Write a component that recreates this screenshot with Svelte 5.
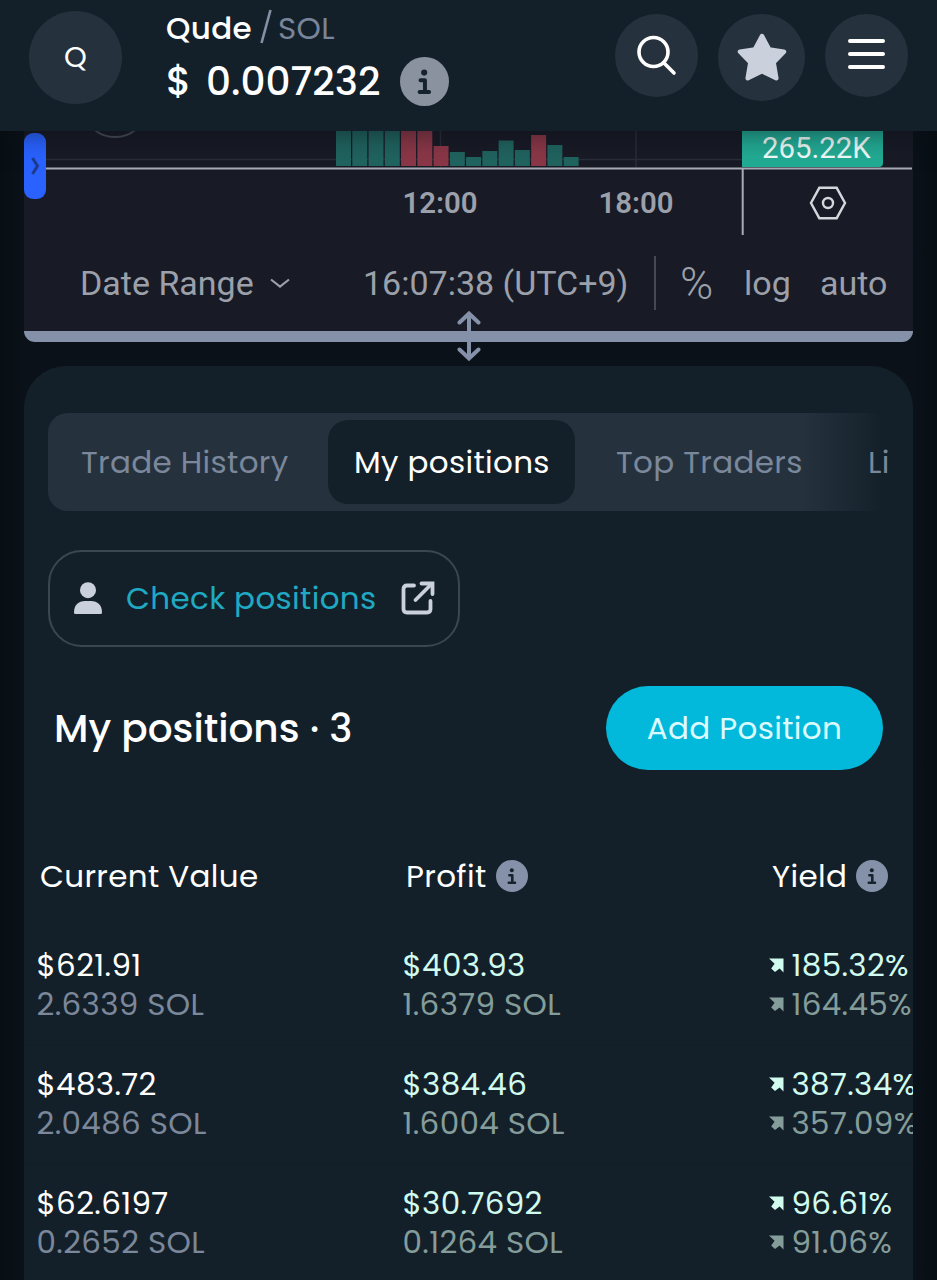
<script>
  let activeTab = $state('My positions');

  const tabs = [
    { name: 'Trade History', cls: 'history' },
    { name: 'My positions', cls: 'mine' },
    { name: 'Top Traders', cls: 'top' },
    { name: 'Li', cls: 'last' }
  ];

  // volume bars, heights in px above the time axis
  const volume = [
    { h: 36, up: true },
    { h: 36, up: true },
    { h: 36, up: true },
    { h: 36, up: true },
    { h: 36, up: false },
    { h: 36, up: false },
    { h: 20, up: false },
    { h: 14, up: true },
    { h: 9, up: true },
    { h: 15, up: true },
    { h: 25.5, up: true },
    { h: 16, up: true },
    { h: 31, up: false },
    { h: 21, up: true },
    { h: 9, up: true }
  ];

  const positions = [
    {
      value: '$621.91',
      valueSol: '2.6339 SOL',
      profit: '$403.93',
      profitSol: '1.6379 SOL',
      yieldUsd: '185.32%',
      yieldSol: '164.45%'
    },
    {
      value: '$483.72',
      valueSol: '2.0486 SOL',
      profit: '$384.46',
      profitSol: '1.6004 SOL',
      yieldUsd: '387.34%',
      yieldSol: '357.09%'
    },
    {
      value: '$62.6197',
      valueSol: '0.2652 SOL',
      profit: '$30.7692',
      profitSol: '0.1264 SOL',
      yieldUsd: '96.61%',
      yieldSol: '91.06%'
    }
  ];
</script>

{#snippet info(size)}
  <svg class="info" width={size} height={size} viewBox="0 0 32 32" aria-hidden="true">
    <circle cx="16" cy="16" r="16" fill="currentColor" />
    <circle cx="15.8" cy="10.2" r="2" fill="#17232c" />
    <path d="M13.4 15.2h2.9v7.4M12.8 22.8h6.2" fill="none" stroke="#17232c" stroke-width="2.6" stroke-linecap="round" stroke-linejoin="round" />
  </svg>
{/snippet}

{#snippet arrow()}
  <svg class="arrow" width="15" height="15" viewBox="0 0 15 15" aria-hidden="true">
    <path d="M0 .5H14.5V14.5L10.6 10.6 6 14 2.2 10.4 5.6 5.8Z" fill="currentColor" />
  </svg>
{/snippet}

<div class="page">
  <header>
    <div class="avatar">Q</div>
    <div class="token">
      <div class="pair">
        <span class="name">Qude</span>
        <svg class="slash" width="12" height="36" viewBox="0 0 12 36"><path d="M10.5 1 1.5 34" stroke="#8490a5" stroke-width="2.6" /></svg>
        <span class="quote">SOL</span>
      </div>
      <div class="price">
        <span class="dollar">$</span>
        <span class="amount">0.007232</span>
        {@render info(49)}
      </div>
    </div>
    <nav>
      <button class="round" aria-label="Search">
        <svg width="42" height="42" viewBox="0 0 42 42" fill="none" stroke="#fff" stroke-width="3.6" stroke-linecap="round">
          <circle cx="17.5" cy="17" r="14.5" />
          <path d="M28 28 38 38" />
        </svg>
      </button>
      <button class="round star" aria-label="Favourite">
        <svg width="50" height="49" viewBox="0 0 50 49">
          <path d="M25 3 32.2 16.6 47 18.7 36.6 29.4 39.3 45.2 25 38.2 10.7 45.2 13.4 29.4 3 18.7 17.8 16.6Z" fill="#cad0dc" stroke="#cad0dc" stroke-width="4.5" stroke-linejoin="round" />
        </svg>
      </button>
      <button class="round menu" aria-label="Menu">
        <svg width="37" height="32" viewBox="0 0 37 32" stroke="#fff" stroke-width="4" stroke-linecap="round">
          <path d="M2 3H35M2 16H35M2 29H35" />
        </svg>
      </button>
    </nav>
  </header>

  <section class="chart">
    <div class="plot">
      <svg width="889" height="105" viewBox="24 130 889 105" aria-hidden="true">
        <path d="M24 159.5H742M440.5 130V167M636 130V167" stroke="#2a2d38" stroke-width="1.5" />
        <circle cx="115" cy="104" r="33" fill="none" stroke="#474b56" stroke-width="2" />
        {#each volume as bar, i}
          <rect x={336 + i * 16.26} y={166 - bar.h} width="15" height={bar.h} fill={bar.up ? '#20635f' : '#8a3747'} />
        {/each}
        <path d="M24 168.5H912M742.7 168V235" stroke="#a9abb6" stroke-width="2" />
      </svg>
      <div class="volume-tag">265.22K</div>
      <span class="tick noon">12:00</span>
      <span class="tick evening">18:00</span>
      <svg class="axis-settings" width="38" height="34" viewBox="0 0 38 34" fill="none" stroke="#d4d6dc" stroke-width="2.4">
        <path d="M10.3 1.8H27.7L36 17 27.7 32.2H10.3L2 17Z" />
        <circle cx="19" cy="17" r="5" />
      </svg>
      <div class="handle">
        <svg width="9" height="18" viewBox="0 0 9 18"><path d="M1.5 1 6.5 9 1.5 17" fill="none" stroke="#1e3a8c" stroke-width="3" /></svg>
      </div>
    </div>
    <div class="toolbar">
      <span class="range">Date Range</span>
      <svg class="chevron" width="20" height="11" viewBox="0 0 20 11"><path d="M1 1.5 10 8.5 19 1.5" fill="none" stroke="#9ba0aa" stroke-width="2.2" /></svg>
      <span class="clock">16:07:38 (UTC+9)</span>
      <span class="divider"></span>
      <span class="percent">%</span>
      <span class="log">log</span>
      <span class="auto">auto</span>
    </div>
    <div class="resizer">
      <svg width="26" height="50" viewBox="0 0 26 50" fill="none" stroke="#8491a9" stroke-width="4" stroke-linecap="round">
        <path d="M13 3V47M3.5 11.5 13 2.5 22.5 11.5M3.5 38.5 13 47.5 22.5 38.5" />
      </svg>
    </div>
  </section>

  <main>
    <div class="tabs">
      {#each tabs as tab}
        <button class="tab {tab.cls}" class:active={tab.name === activeTab} onclick={() => (activeTab = tab.name)}>{tab.name}</button>
      {/each}
    </div>

    <button class="check">
      <svg width="28" height="33" viewBox="0 0 28 33" fill="#cad0dc">
        <circle cx="14" cy="8.2" r="8" />
        <path d="M0 30.5C0 23 4.5 19 11 19H17C23.5 19 28 23 28 30.5Q28 32 26.5 32H1.5Q0 32 0 30.5Z" />
      </svg>
      <span>Check positions</span>
      <svg class="external" width="34" height="34" viewBox="0 0 34 34" fill="none" stroke="#cad0dc" stroke-width="3.8" stroke-linecap="round">
        <path d="M13 4.5H6Q2.5 4.5 2.5 8V28Q2.5 31.5 6 31.5H26Q29.5 31.5 29.5 28V20" />
        <path d="M14.5 19 30 3.5" />
        <path d="M20.5 2.5H31.5V13" />
      </svg>
    </button>

    <div class="heading">
      <h1>My positions · 3</h1>
      <button class="add">Add Position</button>
    </div>

    <div class="grid head">
      <span>Current Value</span>
      <span>Profit {@render info(32)}</span>
      <span>Yield {@render info(32)}</span>
    </div>

    {#each positions as p}
      <div class="grid row">
        <div>
          <div class="usd">{p.value}</div>
          <div class="sol">{p.valueSol}</div>
        </div>
        <div class="gain">
          <div class="usd">{p.profit}</div>
          <div class="sol">{p.profitSol}</div>
        </div>
        <div class="gain">
          <div class="usd">{@render arrow()}{p.yieldUsd}</div>
          <div class="sol">{@render arrow()}{p.yieldSol}</div>
        </div>
      </div>
    {/each}
  </main>
</div>

<style>
  :global(body) {
    background: #091017;
  }
  .page {
    width: 937px;
    height: 1280px;
    overflow: hidden;
    display: flex;
    flex-direction: column;
    background: linear-gradient(90deg, #070e14, #0a1118 24px, #0a1118 913px, #070e14);
    color: #fff;
    font-family: Poppins, Inter, sans-serif;
    font-size: 31px;
    letter-spacing: 0.34px;
  }
  .page * {
    box-sizing: border-box;
  }
  svg {
    display: block;
    flex: none;
  }
  button {
    border: 0;
    padding: 0;
    margin: 0;
    background: none;
    color: inherit;
    font: inherit;
    letter-spacing: inherit;
  }
  span,
  h1,
  button {
    flex: none;
    white-space: nowrap;
  }

  /* header */
  header {
    position: relative;
    z-index: 1;
    flex: none;
    display: flex;
    align-items: flex-start;
    height: 131px;
    padding: 11px 29px 0;
    background: #142029;
    box-shadow: 0 2px 26px rgba(9, 14, 20, 0.55);
  }
  .avatar {
    width: 93px;
    height: 93px;
    border-radius: 50%;
    background: #25323e;
    font-size: 29px;
    line-height: 92px;
    text-align: center;
  }
  .token {
    margin-left: 44px;
    width: 300px;
    line-height: 36px;
  }
  .pair {
    display: flex;
    align-items: center;
    height: 33px;
  }
  .name {
    width: 94px;
    font-weight: 500;
  }
  .slash {
    margin-top: -2px;
  }
  .quote {
    margin-left: 6px;
    color: #78859a;
  }
  .price {
    display: flex;
    align-items: center;
    height: 52px;
    margin-top: 11px;
    font-size: 39px;
    font-weight: 500;
    letter-spacing: 0;
  }
  .dollar {
    width: 40px;
    padding-top: 2px;
  }
  .amount {
    width: 194px;
    padding-top: 2px;
  }
  .price .info {
    color: #8a929f;
  }
  nav {
    display: flex;
    align-items: flex-start;
    gap: 20px;
    margin-left: auto;
    padding-top: 3px;
  }
  .round {
    display: flex;
    align-items: center;
    justify-content: center;
    width: 83px;
    height: 83px;
    border-radius: 50%;
    background: #25323e;
  }
  .star {
    width: 87px;
    height: 87px;
  }
  .menu {
    padding-bottom: 3px;
  }

  /* chart */
  .chart {
    position: relative;
    flex: none;
    width: 889px;
    height: 212px;
    margin: -1px 24px 0;
    border-bottom: 11px solid #8491a9;
    border-radius: 0 0 11px 11px;
    background: #181a25;
    font-family: Roboto, sans-serif;
    letter-spacing: 0;
    color: #9ba0aa;
  }
  .plot {
    position: relative;
    height: 105px;
  }
  .volume-tag {
    position: absolute;
    left: 718px;
    top: 0;
    width: 141px;
    height: 37px;
    padding-left: 20px;
    border-radius: 0 0 4px 0;
    background: #22ab94;
    color: #eefaf8;
    font-size: 29.4px;
    line-height: 36px;
  }
  .tick {
    position: absolute;
    top: 55px;
    width: 100px;
    font-size: 29.4px;
    font-weight: 600;
    line-height: 36px;
    text-align: center;
  }
  .noon {
    left: 366px;
  }
  .evening {
    left: 562px;
  }
  .axis-settings {
    position: absolute;
    left: 785px;
    top: 56px;
  }
  .handle {
    position: absolute;
    left: 0;
    top: 3px;
    display: flex;
    align-items: center;
    justify-content: center;
    width: 22px;
    height: 66px;
    border-radius: 9px;
    background: #2962ff;
  }
  .toolbar {
    display: flex;
    align-items: center;
    height: 96px;
    padding-left: 56px;
    font-size: 34px;
  }
  .range {
    width: 190px;
  }
  .clock {
    width: 291px;
    margin-left: 73px;
  }
  .divider {
    width: 2px;
    height: 54px;
    background: #434a56;
  }
  .percent {
    width: 64px;
    margin-left: 24px;
    padding-top: 2px;
    font-size: 45px;
    font-weight: 300;
    line-height: 50px;
  }
  .log {
    width: 76px;
  }
  .resizer {
    position: absolute;
    left: 431.5px;
    bottom: -30px;
  }

  /* positions card */
  main {
    flex: 1;
    width: 889px;
    margin: 24px 24px 0;
    padding-top: 47px;
    border-radius: 42px 42px 0 0;
    background: #142029;
    overflow: hidden;
  }
  .tabs {
    display: flex;
    align-items: center;
    width: 842px;
    height: 98px;
    margin-left: 24px;
    border-radius: 20px;
    background: linear-gradient(90deg, #25323e 755px, #142029 835px);
    overflow: hidden;
  }
  .tab {
    flex: none;
    height: 84px;
    border-radius: 20px;
    color: #7b879a;
    text-align: left;
  }
  .tab.active {
    background: #142029;
    color: #fff;
  }
  .history {
    width: 280px;
    padding-left: 33px;
  }
  .mine {
    width: 247px;
    padding-left: 26px;
  }
  .top {
    width: 253px;
    padding-left: 41px;
  }
  .last {
    padding-left: 40px;
  }
  .check {
    display: flex;
    align-items: center;
    width: 412px;
    height: 97px;
    margin: 39px 0 0 24px;
    padding-left: 24px;
    border: 2px solid #3b4651;
    border-radius: 34px;
  }
  .check span {
    width: 299px;
    padding-left: 24px;
    color: #1fa9c3;
    text-align: left;
  }
  .external {
    margin-top: -2px;
  }
  .heading {
    display: flex;
    align-items: center;
    justify-content: space-between;
    height: 84px;
    margin-top: 39px;
    padding: 0 30px;
  }
  h1 {
    margin: 0;
    font-size: 39px;
    font-weight: 500;
    letter-spacing: 0;
  }
  .add {
    width: 277px;
    height: 84px;
    border-radius: 42px;
    background: #02b9dc;
    color: #dcfbff;
  }

  .grid {
    display: grid;
    grid-template-columns: 366px 366px 1fr;
  }
  .head {
    height: 40px;
    margin-top: 86px;
    margin-bottom: 31px;
    padding-left: 16px;
    line-height: 40px;
  }
  .head span {
    display: flex;
    align-items: center;
  }
  .head .info {
    margin-left: 9px;
    color: #8491a9;
  }
  .row {
    height: 119px;
    padding: 19px 0 0 12.5px;
    border-bottom: 2px solid #131e26;
  }
  .usd,
  .sol {
    display: flex;
    align-items: center;
    height: 39px;
    line-height: 39px;
    white-space: nowrap;
  }
  .sol {
    color: #7b879a;
  }
  .gain .usd {
    color: #d0fbee;
  }
  .gain .sol {
    color: #849d9b;
  }
  .arrow {
    margin-right: 8px;
  }
</style>
